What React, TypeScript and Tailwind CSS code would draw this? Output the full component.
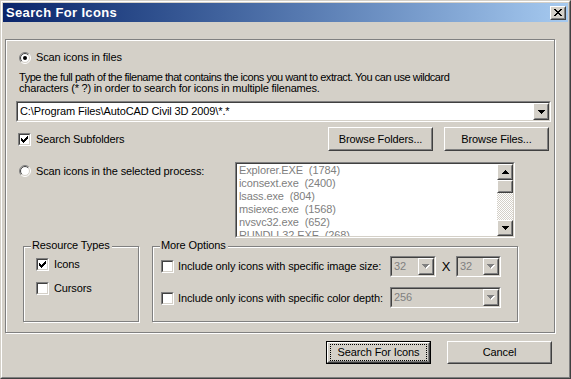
import React from "react";

function Pix({ rows, color }: { rows: string[]; color: string }) {
  const w = rows[0].length;
  const h = rows.length;
  const rects: React.ReactElement[] = [];
  rows.forEach((r, y) => {
    for (let x = 0; x < r.length; x++) {
      if (r[x] === "X") rects.push(<rect key={`${x}-${y}`} x={x} y={y} width={1} height={1} fill={color} />);
    }
  });
  return (
    <svg width={w} height={h} viewBox={`0 0 ${w} ${h}`} shapeRendering="crispEdges" className="block">
      {rects}
    </svg>
  );
}

const DOWN = ["XXXXXXX", ".XXXXX.", "..XXX..", "...X..."];
const UP = ["...X...", "..XXX..", ".XXXXX.", "XXXXXXX"];
const CHECK = ["......X", ".....XX", "X...XXX", "XX.XXX.", "XXXXX..", ".XXX...", "..X...."];
const CLOSE = ["XX....XX", ".XX..XX.", "..XXXX..", "...XX...", "..XXXX..", ".XX..XX.", "XX....XX"];

function DisabledDown() {
  return (
    <div className="relative w-[8px] h-[5px]">
      <div className="absolute left-[1px] top-[1px]">
        <Pix rows={DOWN} color="#ffffff" />
      </div>
      <div className="absolute left-0 top-0">
        <Pix rows={DOWN} color="#808080" />
      </div>
    </div>
  );
}

function Raised({ className, innerClassName, children }: { className: string; innerClassName?: string; children?: React.ReactNode }) {
  return (
    <div className={`border border-t-white border-l-white border-r-[#404040] border-b-[#404040] bg-[#d4d0c8] ${className}`}>
      <div className={`h-full w-full border border-t-[#d4d0c8] border-l-[#d4d0c8] border-r-[#808080] border-b-[#808080] flex items-center justify-center ${innerClassName ?? ""}`}>
        {children}
      </div>
    </div>
  );
}

function Sunken({ className, innerClassName, children }: { className: string; innerClassName?: string; children?: React.ReactNode }) {
  return (
    <div className={`border border-t-[#808080] border-l-[#808080] border-r-white border-b-white ${className}`}>
      <div className={`h-full w-full border border-t-[#404040] border-l-[#404040] border-r-[#d4d0c8] border-b-[#d4d0c8] ${innerClassName ?? ""}`}>
        {children}
      </div>
    </div>
  );
}

function Checkbox({ checked }: { checked?: boolean }) {
  return (
    <Sunken className="w-[13px] h-[13px] shrink-0" innerClassName="bg-white flex items-center justify-center">
      {checked ? <Pix rows={CHECK} color="#000000" /> : null}
    </Sunken>
  );
}

function Radio({ checked }: { checked?: boolean }) {
  const a = 6 - 5.5 * Math.SQRT1_2;
  const b = 6 + 5.5 * Math.SQRT1_2;
  const c = 6 - 4.5 * Math.SQRT1_2;
  const d = 6 + 4.5 * Math.SQRT1_2;
  return (
    <svg width={12} height={12} viewBox="0 0 12 12" className="block shrink-0">
      <circle cx={6} cy={6} r={5} fill="#ffffff" />
      <path d={`M${a} ${b} A5.5 5.5 0 0 1 ${b} ${a}`} stroke="#808080" strokeWidth={1} fill="none" />
      <path d={`M${b} ${a} A5.5 5.5 0 0 1 ${a} ${b}`} stroke="#ffffff" strokeWidth={1} fill="none" />
      <path d={`M${c} ${d} A4.5 4.5 0 0 1 ${d} ${c}`} stroke="#404040" strokeWidth={1} fill="none" />
      <path d={`M${d} ${c} A4.5 4.5 0 0 1 ${c} ${d}`} stroke="#d4d0c8" strokeWidth={1} fill="none" />
      {checked ? <circle cx={6} cy={6} r={2} fill="#000000" /> : null}
    </svg>
  );
}

function Group({ label, className, children }: { label?: string; className: string; children?: React.ReactNode }) {
  return (
    <div className={`relative border border-[#808080] shadow-[1px_1px_0_#ffffff,inset_1px_1px_0_#ffffff] ${className}`}>
      {label ? (
        <span className="absolute left-[7px] top-[-7px] bg-[#d4d0c8] pl-[1px] pr-[2px] leading-[11px] whitespace-nowrap">{label}</span>
      ) : null}
      {children}
    </div>
  );
}

function DisabledCombo({ value, className }: { value: string; className: string }) {
  return (
    <Sunken className={`h-[21px] shrink-0 ${className}`} innerClassName="bg-[#d4d0c8] flex items-center">
      <span className="flex-1 pl-[2px] text-[#808080] leading-[13px]">{value}</span>
      <Raised className="w-[16px] h-[17px] shrink-0">
        <DisabledDown />
      </Raised>
    </Sunken>
  );
}

const PROCESSES = [
  "Explorer.EXE  (1784)",
  "iconsext.exe  (2400)",
  "lsass.exe  (804)",
  "msiexec.exe  (1568)",
  "nvsvc32.exe  (652)",
  "RUNDLL32.EXE  (268)",
];

export default function App() {
  return (
    <div className="w-[571px] h-[379px] border border-t-[#d4d0c8] border-l-[#d4d0c8] border-r-[#404040] border-b-[#404040] bg-[#d4d0c8] font-['Liberation_Sans',Arial,sans-serif] text-[11px] tracking-[-0.12px] text-black overflow-hidden">
      <div className="h-full border border-t-white border-l-white border-r-[#808080] border-b-[#808080] p-[1px] flex flex-col">
        {/* Title bar */}
        <div className="h-[19px] shrink-0 flex items-center bg-gradient-to-r from-[#0a246a] to-[#a6caf0] pl-[3px] pr-[2px]">
          <span className="flex-1 text-white font-bold text-[13px] tracking-[0.35px] leading-[15px]">Search For Icons</span>
          <Raised className="w-[16px] h-[14px]">
            <Pix rows={CLOSE} color="#000000" />
          </Raised>
        </div>

        {/* Main etched box */}
        <Group className="mt-[17px] ml-[2px] w-[550px] h-[294px] shrink-0">
          <div className="flex flex-col">
            {/* Scan icons in files */}
            <div className="mt-[11px] pl-[13px] h-[13px] flex items-center gap-[5px]">
              <Radio checked />
              <span className="leading-[13px]">Scan icons in files</span>
            </div>
            <div className="mt-[8px] pl-[13px] leading-[11px] whitespace-nowrap">
              <div className="tracking-[-0.46px]">
                Type the full path of the filename that contains the icons you want to extract. You can use wildcard
              </div>
              <div className="tracking-[-0.2px]">characters (* ?) in order to search for icons in multiple filenames.</div>
            </div>
            {/* Path combo */}
            <Sunken className="mt-[7px] ml-[10px] w-[535px] h-[21px]" innerClassName="bg-white flex items-center">
              <span className="flex-1 pl-[2px] leading-[13px] whitespace-nowrap">C:\Program Files\AutoCAD Civil 3D 2009\*.*</span>
              <Raised className="w-[16px] h-[17px] shrink-0">
                <Pix rows={DOWN} color="#000000" />
              </Raised>
            </Sunken>
            {/* Subfolders + browse */}
            <div className="mt-[5px] h-[24px] flex items-center pl-[12px] pr-[5px]">
              <Checkbox checked />
              <span className="ml-[5px] leading-[13px]">Search Subfolders</span>
              <div className="ml-auto flex gap-[11px]">
                <Raised className="w-[105px] h-[24px]">Browse Folders...</Raised>
                <Raised className="w-[105px] h-[24px]">Browse Files...</Raised>
              </div>
            </div>
            {/* Process */}
            <div className="mt-[11px] flex items-start pl-[13px]">
              <div className="w-[216px] mt-[3px] flex items-center gap-[5px] h-[12px]">
                <Radio />
                <span className="leading-[13px]">Scan icons in the selected process:</span>
              </div>
              <Sunken className="w-[280px] h-[76px]" innerClassName="bg-white flex">
                <div className="flex-1 overflow-hidden pl-[2px] text-[#808080]">
                  {PROCESSES.map((p) => (
                    <div key={p} className="h-[13px] leading-[13px] whitespace-pre">{p}</div>
                  ))}
                </div>
                <div className="w-[16px] flex flex-col shrink-0">
                  <Raised className="w-[16px] h-[16px] shrink-0">
                    <Pix rows={UP} color="#000000" />
                  </Raised>
                  <Raised className="w-[16px] h-[13px] shrink-0" />
                  <div className="flex-1 bg-[repeating-conic-gradient(#ffffff_0_25%,#d4d0c8_0_50%)] bg-[length:2px_2px]" />
                  <Raised className="w-[16px] h-[16px] shrink-0">
                    <Pix rows={DOWN} color="#000000" />
                  </Raised>
                </div>
              </Sunken>
            </div>
            {/* Groups */}
            <div className="mt-[8px] flex pl-[17px] gap-[13px]">
              <Group label="Resource Types" className="w-[116px] h-[76px]">
                <div className="flex flex-col pl-[12px]">
                  <div className="mt-[11px] h-[13px] flex items-center">
                    <Checkbox checked />
                    <span className="ml-[5px] leading-[13px]">Icons</span>
                  </div>
                  <div className="mt-[11px] h-[13px] flex items-center">
                    <Checkbox />
                    <span className="ml-[5px] leading-[13px]">Cursors</span>
                  </div>
                </div>
              </Group>
              <Group label="More Options" className="w-[366px] h-[76px]">
                <div className="flex flex-col pl-[8px]">
                  <div className="mt-[9px] h-[21px] flex items-center">
                    <div className="w-[229px] flex items-center">
                      <Checkbox />
                      <span className="ml-[4px] leading-[13px] whitespace-nowrap">Include only icons with specific image size:</span>
                    </div>
                    <DisabledCombo value="32" className="w-[46px]" />
                    <span className="w-[20px] text-center text-[13px] leading-[13px]">X</span>
                    <DisabledCombo value="32" className="w-[45px]" />
                  </div>
                  <div className="mt-[10px] h-[21px] flex items-center">
                    <div className="w-[229px] flex items-center mt-[2px]">
                      <Checkbox />
                      <span className="ml-[4px] leading-[13px] whitespace-nowrap">Include only icons with specific color depth:</span>
                    </div>
                    <DisabledCombo value="256" className="w-[111px]" />
                  </div>
                </div>
              </Group>
            </div>
          </div>
        </Group>

        {/* Bottom buttons */}
        <div className="mt-[8px] flex justify-end gap-[16px] pr-[16px]">
          <div className="w-[105px] h-[23px] border border-black">
            <Raised className="w-full h-full">
              <div className="w-full h-full m-[1px] border border-dotted border-black flex items-center justify-center">Search For Icons</div>
            </Raised>
          </div>
          <Raised className="w-[105px] h-[23px]">Cancel</Raised>
        </div>
      </div>
    </div>
  );
}
